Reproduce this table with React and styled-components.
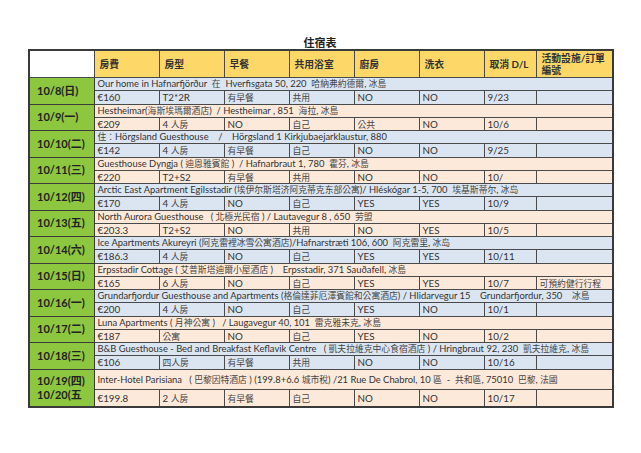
import React from 'react';
import styled, { createGlobalStyle } from 'styled-components';

const GlobalStyle = createGlobalStyle`
  html, body {
    margin: 0;
    padding: 0;
    background: #ffffff;
  }
  body {
    font-family: Lato, "Noto Sans CJK TC", sans-serif;
  }
`;

const Page = styled.div`
  width: 641px;
  height: 453px;
  padding: 36px 0 0 28px;
  box-sizing: border-box;
`;

const Title = styled.div`
  width: 584px;
  text-align: center;
  font-size: 11px;
  line-height: 13px;
  font-weight: bold;
  color: #222;
`;

const Table = styled.table`
  width: 584px;
  table-layout: fixed;
  border-collapse: collapse;
  border: 2px solid #3a3a3a;
  font-size: 9.4px;
  color: #333;
`;

const HeadCell = styled.th`
  height: 26px;
  padding: 0 0 0 5px;
  background: ${(p) => (p.$blank ? '#ffffff' : '#fdd868')};
  border: 1px solid #4a4a4a;
  text-align: left;
  font-weight: bold;
  font-size: 9.8px;
  line-height: 12px;
  color: #333;
  vertical-align: middle;
`;

const DateCell = styled.td`
  background: #8dc63f;
  border: 1px solid #3a3a3a;
  padding: 0 0 0 7px;
  font-weight: bold;
  font-size: 11px;
  line-height: 14px;
  color: #222;
  vertical-align: middle;
  white-space: nowrap;
  overflow: hidden;
`;

const BodyCell = styled.td`
  background: ${(p) => p.$bg};
  border: 1px solid #4a4a4a;
  padding: 0;
  vertical-align: middle;
`;

const CellText = styled.div`
  height: ${(p) => p.$h}px;
  line-height: ${(p) => p.$h}px;
  padding-left: 3px;
  font-size: ${(p) => (p.$big ? '9.8px' : 'inherit')};
  white-space: pre;
  overflow: hidden;
`;

const Han = styled.span`
  font-size: 8.8px;
  color: #454545;
`;

const BLUE = '#dbe5f1';
const PEACH = '#fde9d9';

const headers = ['房費', '房型', '早餐', '共用浴室', '廚房', '洗衣', '取消 D/L', '活動設施/訂單編號'];
const widths = [65, 65, 65, 65, 65, 65, 65, 52, 77];

const stays = [
  { date: ['10/8(日)'], name: 'Our home in Hafnarfjörður  在  Hverfisgata 50, 220  哈納弗約德爾, 冰島', cells: ['€160', 'T2*2R', '有早餐', '共用', 'NO', 'NO', '9/23', ''] },
  { date: ['10/9(一)'], name: 'Hestheimar(海斯埃瑪爾酒店)  / Hestheimar , 851  海拉, 冰島', cells: ['€209', '4 人房', 'NO', '自己', '公共', 'NO', '10/6', ''] },
  { date: ['10/10(二)'], name: '住：Hörgsland Guesthouse    /    Hörgsland 1 Kirkjubaejarklaustur, 880', cells: ['€142', '4 人房', '有早餐', '自己', 'NO', 'NO', '9/25', ''] },
  { date: ['10/11(三)'], name: 'Guesthouse Dyngja ( 迪恩雅賓館 )  / Hafnarbraut 1, 780  霍芬, 冰島', cells: ['€220', 'T2+S2', '有早餐', '共用', 'NO', 'NO', '10/', ''] },
  { date: ['10/12(四)'], name: 'Arctic East Apartment Egilsstadir (埃伊尔斯塔济阿克蒂克东部公寓)/ Hléskógar 1-5, 700  埃基斯蒂尔, 冰岛', cells: ['€170', '4 人房', 'NO', '自己', 'YES', 'YES', '10/9', ''] },
  { date: ['10/13(五)'], name: 'North Aurora Guesthouse   ( 北極光民宿 ) / Lautavegur 8 , 650  劳盟', cells: ['€203.3', 'T2+S2', 'NO', '共用', 'NO', 'YES', '10/5', ''] },
  { date: ['10/14(六)'], name: 'Ice Apartments Akureyri (阿克雷裡冰雪公寓酒店)/Hafnarstræti 106, 600  阿克雷里, 冰岛', cells: ['€186.3', '4 人房', 'NO', '自己', 'YES', 'YES', '10/11', ''] },
  { date: ['10/15(日)'], name: 'Erpsstadir Cottage ( 艾普斯塔迪爾小屋酒店 )    Erpsstadir, 371 Sauðafell, 冰島', cells: ['€165', '6 人房', 'NO', '自己', 'YES', 'YES', '10/7', '可預約健行行程'] },
  { date: ['10/16(一)'], name: 'Grundarfjordur Guesthouse and Apartments (格倫達菲厄澤賓館和公寓酒店) / Hlidarvegur 15    Grundarfjordur, 350    冰島', cells: ['€200', '4 人房', 'NO', '自己', 'YES', 'NO', '10/1', ''] },
  { date: ['10/17(二)'], name: 'Luna Apartments ( 月神公寓 )   / Laugavegur 40, 101  雷克雅未克, 冰島', cells: ['€187', '公寓', 'NO', '自己', 'YES', 'NO', '10/2', ''] },
  { date: ['10/18(三)'], name: 'B&B Guesthouse - Bed and Breakfast Keflavik Centre   ( 凱夫拉維克中心食宿酒店 ) / Hringbraut 92, 230  凱夫拉維克, 冰島', cells: ['€106', '四人房', '有早餐', '共用', 'NO', 'NO', '10/16', ''] },
  { date: ['10/19(四)', '10/20(五'], name: 'Inter-Hotel Parisiana   ( 巴黎因特酒店 ) (199.8+6.6 城市稅) /21 Rue De Chabrol, 10 區  -  共和區, 75010  巴黎, 法國', cells: ['€199.8', '2 人房', '有早餐', '自己', 'NO', 'NO', '10/17', ''], tall: true },
];

// split mixed text so the CJK runs get their own (smaller) size
function Mixed({ text }) {
  const parts = text.split(/([\u3000-\u9fff\uff00-\uffef]+)/);
  return parts.map((p, i) =>
    /[\u3000-\u9fff\uff00-\uffef]/.test(p) ? <Han key={i}>{p}</Han> : p
  );
}

export default function App() {
  return (
    <Page>
      <GlobalStyle />
      <Title>住宿表</Title>
      <Table>
        <colgroup>
          {widths.map((w, i) => (
            <col key={i} style={{ width: w }} />
          ))}
        </colgroup>
        <thead>
          <tr>
            <HeadCell $blank />
            {headers.map((h) => (
              <HeadCell key={h}>{h}</HeadCell>
            ))}
          </tr>
        </thead>
        <tbody>
          {stays.map((s, i) => {
            const bg = i % 2 === 0 ? BLUE : PEACH;
            const nameH = s.tall ? 19 : 12.25;
            const rowH = s.tall ? 16 : 12.25;
            return (
              <React.Fragment key={i}>
                <tr>
                  <DateCell rowSpan={2}>
                    {s.date.map((d, j) => (
                      <div key={j}>{d}</div>
                    ))}
                  </DateCell>
                  <BodyCell colSpan={8} $bg={bg}>
                    <CellText $h={nameH}>
                      <Mixed text={s.name} />
                    </CellText>
                  </BodyCell>
                </tr>
                <tr>
                  {s.cells.map((c, j) => (
                    <BodyCell key={j} $bg={bg}>
                      <CellText $h={rowH} $big>
                        <Mixed text={c} />
                      </CellText>
                    </BodyCell>
                  ))}
                </tr>
              </React.Fragment>
            );
          })}
        </tbody>
      </Table>
    </Page>
  );
}
